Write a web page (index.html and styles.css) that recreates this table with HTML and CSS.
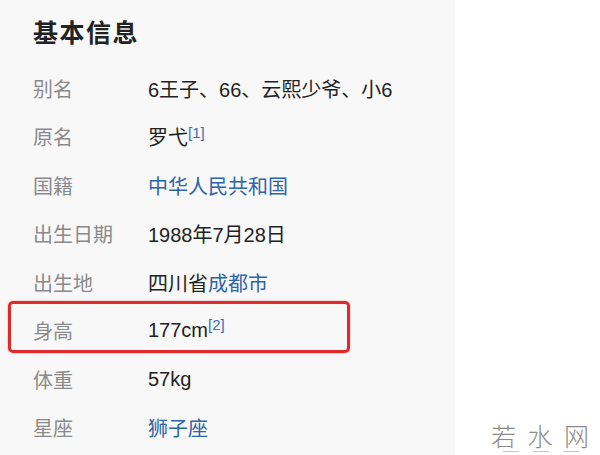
FILE: index.html
```html
<!DOCTYPE html>
<html lang="zh-CN">
<head>
  <meta charset="UTF-8">
  <title>基本信息</title>
  <link rel="stylesheet" href="styles.css">
</head>
<body>
  <div class="page">
    <div class="panel">
      <h2 class="title">基本信息</h2>
      <dl class="info">
        <div class="row">
          <dt>别名</dt>
          <dd>6王子、66、云熙少爷、小6</dd>
        </div>
        <div class="row">
          <dt>原名</dt>
          <dd>罗弋<sup class="ref">[1]</sup></dd>
        </div>
        <div class="row">
          <dt>国籍</dt>
          <dd><a href="#">中华人民共和国</a></dd>
        </div>
        <div class="row">
          <dt>出生日期</dt>
          <dd>1988年7月28日</dd>
        </div>
        <div class="row">
          <dt>出生地</dt>
          <dd>四川省<a href="#">成都市</a></dd>
        </div>
        <div class="row marked">
          <dt>身高</dt>
          <dd>177cm<sup class="ref">[2]</sup></dd>
          <span class="mark"></span>
        </div>
        <div class="row">
          <dt>体重</dt>
          <dd>57kg</dd>
        </div>
        <div class="row">
          <dt>星座</dt>
          <dd><a href="#">狮子座</a></dd>
        </div>
      </dl>
    </div>
    <div class="side">
      <div class="watermark">
        <span class="wm-text">若 水 网</span>
        <span class="wm-sub"><i></i><i></i><i></i></span>
      </div>
    </div>
  </div>
</body>
</html>
```

FILE: styles.css
```css
body {
  margin: 0;
  font-family: "Liberation Sans", "Noto Sans CJK SC", sans-serif;
  background: #fff;
}
.page {
  display: flex;
  height: 455px;
  overflow: hidden;
}
.panel {
  width: 455px;
  background: #f8f8f8;
  padding: 14px 0 0 33px;
  box-sizing: border-box;
}
.title {
  margin: 0 0 16px;
  font-family: "Noto Sans CJK SC", sans-serif;
  font-size: 25px;
  font-weight: 700;
  color: #222;
  line-height: 34px;
  letter-spacing: 1.5px;
}
.info {
  margin: 0;
}
.row {
  position: relative;
  display: flex;
  align-items: center;
  height: 48.5px;
  font-size: 20px;
}
.row dt {
  width: 115px;
  color: #8a8a8a;
  font-family: "Noto Sans CJK SC", sans-serif;
}
.row dd {
  margin: 0;
  color: #222;
}
.row a {
  color: #2e64a8;
  text-decoration: none;
}
.ref {
  color: #3b6eb4;
  font-size: 15px;
  vertical-align: 7px;
  line-height: 0;
}
.mark {
  position: absolute;
  left: -25px;
  top: -6px;
  width: 342px;
  height: 52px;
  box-sizing: border-box;
  border: 3px solid #e02a2a;
  border-radius: 5px;
  box-shadow: 0 0 2px rgba(224, 42, 42, 0.5);
}
.side {
  flex: 1;
  display: flex;
  align-items: flex-end;
  justify-content: flex-end;
  padding: 0 8px 3px 0;
}
.watermark {
  display: flex;
  flex-direction: column;
  align-items: center;
  gap: 3px;
}
.wm-text {
  font-family: "Noto Sans CJK SC", sans-serif;
  font-weight: 300;
  font-size: 25px;
  color: #8c8c8c;
  letter-spacing: 3px;
  line-height: 26px;
}
.wm-sub {
  display: flex;
  gap: 14px;
  height: 1px;
}
.wm-sub i {
  width: 16px;
  height: 1px;
  background: #c4c4c4;
}
```
